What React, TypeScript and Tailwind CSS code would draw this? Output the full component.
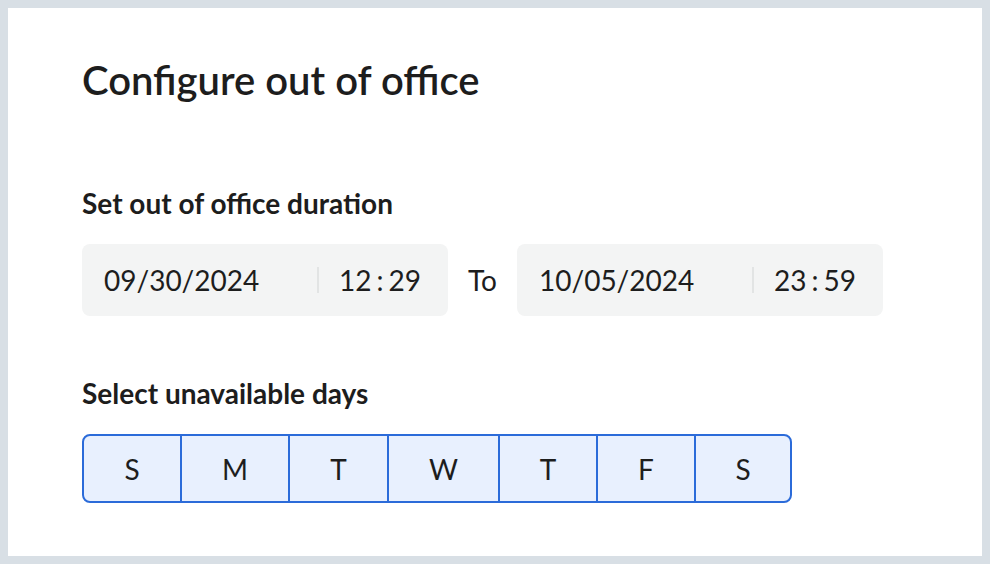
import React from "react";

const days = [
  { label: "S", w: "w-[96px]" },
  { label: "M", w: "w-[108px]" },
  { label: "T", w: "w-[99px]" },
  { label: "W", w: "w-[111px]" },
  { label: "T", w: "w-[98px]" },
  { label: "F", w: "w-[98px]" },
  { label: "S", w: "w-[96px]" },
];

function DateTimeField({ date, hh, mm }: { date: string; hh: string; mm: string }) {
  return (
    <div className="flex h-[72px] w-[366px] items-center rounded-[8px] bg-[#f3f4f4] pl-[22px]">
      <span className="w-[213px] text-[28px] leading-none text-[#1d1d1d]">{date}</span>
      <span className="h-[26px] w-[2px] bg-[#e2e4e4]" />
      <span className="flex items-baseline gap-[5px] pl-[20px] text-[28px] leading-none text-[#1d1d1d]">
        <span>{hh}</span>
        <span>:</span>
        <span>{mm}</span>
      </span>
    </div>
  );
}

export default function App() {
  return (
    <div className="h-[564px] w-[990px] bg-[#d8dfe5] p-[8px] font-['Lato','Liberation_Sans',sans-serif]">
      <div className="flex h-[548px] w-[974px] flex-col bg-white pl-[74px] pt-[50px]">
        <h1 className="text-[40px] font-semibold leading-[44px] text-[#1d1d1d]">Configure out of office</h1>

        <h2 className="mt-[84px] text-[28px] font-bold leading-[34px] text-[#1d1d1d]">Set out of office duration</h2>
        <div className="mt-[24px] flex items-center">
          <DateTimeField date="09/30/2024" hh="12" mm="29" />
          <span className="px-[20px] text-[28px] leading-none text-[#1d1d1d]">To</span>
          <DateTimeField date="10/05/2024" hh="23" mm="59" />
        </div>

        <h2 className="mt-[60px] text-[28px] font-bold leading-[34px] text-[#1d1d1d]">Select unavailable days</h2>
        <div className="mt-[24px] flex h-[69px] w-fit overflow-hidden rounded-[8px] border-2 border-[#2b6bd9] bg-[#e8f0fe]">
          {days.map((d, i) => (
            <div
              key={i}
              className={`${d.w} flex items-center justify-center text-[28px] text-[#1d1d1d] ${i > 0 ? "border-l-2 border-[#2b6bd9]" : ""}`}
            >
              {d.label}
            </div>
          ))}
        </div>
      </div>
    </div>
  );
}
